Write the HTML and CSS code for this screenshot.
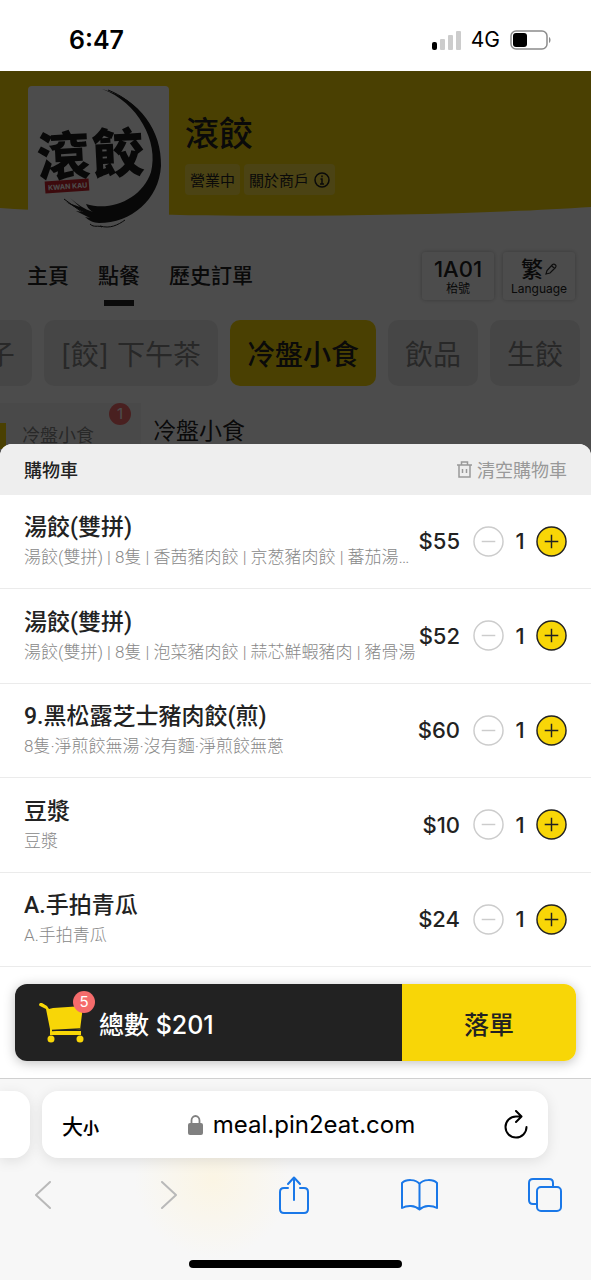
FILE: index.html
```html
<!DOCTYPE html>
<html lang="zh-Hant">
<head>
    <meta charset="UTF-8">
    <meta name="viewport" content="width=device-width, initial-scale=1.0">
    <title>滾餃</title>
    <link rel="stylesheet" href="styles.css">
</head>
<body>
    <div class="status-bar">
        <time class="clock">6:47</time>
        <div class="status-icons">
            <svg width="30" height="20" viewBox="0 0 30 20">
                <rect x="1" y="12" width="5" height="8" rx="2" fill="#000"/>
                <rect x="9" y="9" width="5" height="11" rx="1" fill="#ccc"/>
                <rect x="17" y="5" width="5" height="15" rx="1" fill="#ccc"/>
                <rect x="25" y="1" width="5" height="19" rx="1" fill="#ccc"/>
            </svg>
            <span>4G</span>
            <svg width="41" height="20" viewBox="0 0 41 20">
                <rect x="1" y="1" width="36" height="18" rx="5" fill="none" stroke="#8c8c8c" stroke-width="1.5"/>
                <rect x="3" y="3" width="14" height="14" rx="3" fill="#000"/>
                <path d="M39 7c2 1 2 5 0 6z" fill="#8c8c8c"/>
            </svg>
        </div>
    </div>

    <main class="page">
        <div class="shop">
            <header class="banner">
                <svg class="banner-bg" viewBox="0 0 591 146" preserveAspectRatio="none">
                    <path d="M0 0H591V136C440 146 180 149 0 137z" fill="#f8d607"/>
                </svg>
                <svg class="logo" width="141" height="154" viewBox="0 0 141 154">
                    <rect width="141" height="154" rx="4" fill="#fff"/>
                    <path d="M74 3C112 13 134 45 133 80C131 114 103 137 71 137C66 137 60 134 57 131L62 132L48 125L55 126L38 116L52 121L42 112C49 118 56 123 65 126C60 123 59 120 58 118C83 126 114 113 123 86C131 56 110 16 74 3z" fill="#1c1c1c"/>
                    <path d="M62 138C66 142 70 139 74 141M72 140C82 143 90 139 97 134M80 4C106 14 126 38 130 62M36 113L58 129" fill="none" stroke="#1c1c1c" stroke-width="1"/>
                    <g transform="rotate(-3 65 70)">
                        <text class="logo-text" x="9" y="88">滾</text>
                        <text class="logo-text" x="64" y="88">餃</text>
                    </g>
                    <g transform="rotate(-4 38 100)">
                        <rect x="17" y="94" width="44" height="12" fill="#c8232c"/>
                        <text class="logo-tag" x="20" y="103">KWAN KAU</text>
                    </g>
                </svg>
                <div class="shop-info">
                    <h1>滾餃</h1>
                    <div class="chips">
                        <span class="chip">營業中</span>
                        <a class="chip" href="#">關於商戶
                            <svg width="16" height="16" viewBox="0 0 16 16" fill="none" stroke="#222" stroke-width="1.5">
                                <circle cx="8" cy="8" r="7"/>
                                <path d="M8 3.500V5.300M6.500 7H8V12M6 12H10"/>
                            </svg>
                        </a>
                    </div>
                </div>
            </header>

            <nav class="tabs">
                <a href="#">主頁</a>
                <a href="#" class="active">點餐</a>
                <a href="#">歷史訂單</a>
                <div class="tools">
                    <button type="button" class="tool">
                        <span class="tool-main">1A01</span>
                        <span class="tool-sub">枱號</span>
                    </button>
                    <button type="button" class="tool">
                        <span class="tool-main">繁<svg width="12" height="12" viewBox="0 0 12 12" fill="none" stroke="#333" stroke-width="1.200"><path d="M1 11L2 7.500L7.500 1.500Q9 .5 10.500 2Q11.500 3 10.500 4.500L5 10zM6.500 2.500L9.500 5.500"/></svg></span>
                        <span class="tool-sub">Language</span>
                    </button>
                </div>
            </nav>

            <div class="categories">
                <button type="button">餃子</button>
                <button type="button">[餃] 下午茶</button>
                <button type="button" class="active">冷盤小食</button>
                <button type="button">飲品</button>
                <button type="button">生餃</button>
            </div>

            <div class="menu">
                <aside class="side"><a href="#">冷盤小食<span class="badge">1</span></a></aside>
                <h2>冷盤小食</h2>
            </div>
        </div>

        <div class="mask"></div>

        <section class="sheet">
            <header class="sheet-head">
                <h2>購物車</h2>
                <button type="button" class="clear">
                    <svg width="15" height="17" viewBox="0 0 15 17" fill="none" stroke="#999" stroke-width="1.500">
                        <path d="M0 4H15M4.500 4V1H10.500V4M2 4V16H13V4M5.500 8V12M9.500 8V12"/>
                    </svg>
                    清空購物車
                </button>
            </header>
            <ul class="items">
                <li>
                    <div class="item-text">
                        <h3>湯餃(雙拼)</h3>
                        <p>湯餃(雙拼) | 8隻 | 香茜豬肉餃 | 京葱豬肉餃 | 蕃茄湯…</p>
                    </div>
                    <span class="price">$55</span>
                    <button type="button" class="step" aria-label="減少"><svg viewBox="0 0 32 32"><circle cx="16" cy="16" r="15"/><path d="M9 16H23"/></svg></button>
                    <span class="count">1</span>
                    <button type="button" class="step plus" aria-label="增加"><svg viewBox="0 0 32 32"><circle cx="16" cy="16" r="15"/><path d="M9 16H23M16 9V23"/></svg></button>
                </li>
                <li>
                    <div class="item-text">
                        <h3>湯餃(雙拼)</h3>
                        <p>湯餃(雙拼) | 8隻 | 泡菜豬肉餃 | 蒜芯鮮蝦豬肉 | 豬骨湯</p>
                    </div>
                    <span class="price">$52</span>
                    <button type="button" class="step" aria-label="減少"><svg viewBox="0 0 32 32"><circle cx="16" cy="16" r="15"/><path d="M9 16H23"/></svg></button>
                    <span class="count">1</span>
                    <button type="button" class="step plus" aria-label="增加"><svg viewBox="0 0 32 32"><circle cx="16" cy="16" r="15"/><path d="M9 16H23M16 9V23"/></svg></button>
                </li>
                <li>
                    <div class="item-text">
                        <h3>9.黑松露芝士豬肉餃(煎)</h3>
                        <p>8隻·淨煎餃無湯·沒有麵·淨煎餃無蔥</p>
                    </div>
                    <span class="price">$60</span>
                    <button type="button" class="step" aria-label="減少"><svg viewBox="0 0 32 32"><circle cx="16" cy="16" r="15"/><path d="M9 16H23"/></svg></button>
                    <span class="count">1</span>
                    <button type="button" class="step plus" aria-label="增加"><svg viewBox="0 0 32 32"><circle cx="16" cy="16" r="15"/><path d="M9 16H23M16 9V23"/></svg></button>
                </li>
                <li>
                    <div class="item-text">
                        <h3>豆漿</h3>
                        <p>豆漿</p>
                    </div>
                    <span class="price">$10</span>
                    <button type="button" class="step" aria-label="減少"><svg viewBox="0 0 32 32"><circle cx="16" cy="16" r="15"/><path d="M9 16H23"/></svg></button>
                    <span class="count">1</span>
                    <button type="button" class="step plus" aria-label="增加"><svg viewBox="0 0 32 32"><circle cx="16" cy="16" r="15"/><path d="M9 16H23M16 9V23"/></svg></button>
                </li>
                <li>
                    <div class="item-text">
                        <h3>A.手拍青瓜</h3>
                        <p>A.手拍青瓜</p>
                    </div>
                    <span class="price">$24</span>
                    <button type="button" class="step" aria-label="減少"><svg viewBox="0 0 32 32"><circle cx="16" cy="16" r="15"/><path d="M9 16H23"/></svg></button>
                    <span class="count">1</span>
                    <button type="button" class="step plus" aria-label="增加"><svg viewBox="0 0 32 32"><circle cx="16" cy="16" r="15"/><path d="M9 16H23M16 9V23"/></svg></button>
                </li>
            </ul>
            <footer class="checkout">
                <div class="total">
                    <span class="cart">
                        <svg width="46" height="40" viewBox="0 0 46 40" fill="#f8d607">
                            <path d="M1 0Q-1 2 1 3L7 6L11 26V32H42V28H13V27H41L44 3L14 5L10 6L8 3L3 0Q1 -1 1 0z"/>
                            <path d="M13 27.500L41 26" stroke="#222" stroke-width="1.500"/>
                            <circle cx="12" cy="36" r="3.500"/>
                            <circle cx="41" cy="36" r="3.500"/>
                        </svg>
                        <span class="badge">5</span>
                    </span>
                    總數 $201
                </div>
                <button type="button" class="order">落單</button>
            </footer>
        </section>
    </main>

    <footer class="browser">
        <div class="address-row">
            <div class="prev-tab"></div>
            <div class="address">
                <button type="button" class="text-size" aria-label="文字大小"><span>大</span><small>小</small></button>
                <a class="url" href="#">
                    <svg width="15" height="20" viewBox="0 0 15 20">
                        <rect y="8" width="15" height="12" rx="2" fill="#808080"/>
                        <path d="M3.500 9V5.500a4 4.500 0 0 1 8 0V9" fill="none" stroke="#808080" stroke-width="1.800"/>
                    </svg>
                    meal.pin2eat.com
                </a>
                <button type="button" aria-label="重新載入">
                    <svg width="24" height="30" viewBox="0 0 24 30" fill="none" stroke="#000" stroke-width="2" stroke-linecap="round" stroke-linejoin="round">
                        <path d="M22.500 17A10.500 10.500 0 1 1 12 6.500H17M12 1L17.500 6.500L12 12"/>
                    </svg>
                </button>
            </div>
        </div>
        <nav class="toolbar">
            <button type="button" aria-label="上一頁"><svg width="16" height="28" viewBox="0 0 16 28" stroke="#b9b9b9"><path d="M15 1L1 14L15 27"/></svg></button>
            <button type="button" aria-label="下一頁"><svg width="16" height="28" viewBox="0 0 16 28" stroke="#b9b9b9"><path d="M1 1L15 14L1 27"/></svg></button>
            <button type="button" aria-label="分享"><svg width="30" height="38" viewBox="0 0 30 38"><path d="M9 12H5Q1 12 1 16V33Q1 37 5 37H25Q29 37 29 33V16Q29 12 25 12H21M15 24V2M9 8L15 1.500L21 8"/></svg></button>
            <button type="button" aria-label="書籤"><svg width="37" height="32" viewBox="0 0 37 32"><path d="M18.500 5C15 0 5 0 1 4V29C6 26 14 26 18.500 30.500C23 26 31 26 36 29V4C32 0 22 0 18.500 5V30"/></svg></button>
            <button type="button" aria-label="分頁"><svg width="34" height="34" viewBox="0 0 34 34"><path d="M8 26H5Q1 26 1 22V5Q1 1 5 1H21Q25 1 25 5V8"/><rect x="9" y="9" width="24" height="24" rx="4"/></svg></button>
        </nav>
        <div class="home-bar"></div>
    </footer>
</body>
</html>
```

FILE: styles.css
```css
* {
    box-sizing: border-box;
}

body {
    margin: 0;
    min-height: 100vh;
    display: flex;
    flex-direction: column;
    font-family: Inter, "Noto Sans CJK TC", sans-serif;
    color: #222;
    background: #fff;
    overflow-x: hidden;
}

h1, h2, h3, p, ul {
    margin: 0;
    padding: 0;
    font-weight: 500;
}

button {
    border: none;
    padding: 0;
    background: none;
    font: inherit;
    color: inherit;
    cursor: pointer;
}

a {
    color: inherit;
    text-decoration: none;
}

svg {
    display: block;
    flex-shrink: 0;
}

.status-bar {
    height: 71px;
    padding: 8px 40px 0 69px;
    display: flex;
    align-items: center;
    justify-content: space-between;
    color: #000;
}

.clock {
    font-size: 25px;
    font-weight: 600;
}

.status-icons {
    display: flex;
    align-items: center;
    gap: 10px;
    font-size: 21px;
}

.page {
    position: relative;
    flex: 1;
    overflow: hidden;
}

/* shop page behind the cart */
.banner {
    position: relative;
    display: flex;
    gap: 16px;
    padding: 15px 28px 0;
    height: 169px;
}

.banner-bg {
    position: absolute;
    top: 0;
    left: 0;
    width: 100%;
    height: 146px;
}

.logo {
    position: relative;
}

.logo-text {
    font-size: 53px;
    font-weight: 900;
    fill: #1c1c1c;
}

.logo-tag {
    font-size: 7px;
    font-weight: 700;
    fill: #fff;
}

.shop-info {
    position: relative;
    padding-top: 24px;
}

.shop-info h1 {
    font-size: 34px;
    line-height: 48px;
}

.chips {
    display: flex;
    gap: 4px;
    padding-top: 6px;
}

.chip {
    display: flex;
    align-items: center;
    gap: 5px;
    height: 31px;
    padding: 0 5px;
    border-radius: 4px;
    font-size: 15px;
    background: rgba(255, 255, 255, .25);
}

.tabs {
    display: flex;
    align-items: center;
    gap: 29px;
    height: 72px;
    padding: 0 16px 0 27px;
    font-size: 21px;
    font-weight: 500;
}

.tabs > a {
    display: flex;
    flex-direction: column;
    align-items: center;
    padding-top: 14px;
    line-height: 32px;
}

.tabs > a::after {
    content: "";
    width: 30px;
    height: 6px;
    margin-top: 8px;
}

.tabs .active::after {
    background: #222;
}

.tools {
    display: flex;
    gap: 9px;
    margin-left: auto;
}

.tool {
    width: 72px;
    height: 48px;
    display: flex;
    flex-direction: column;
    align-items: center;
    justify-content: center;
    border-radius: 3px;
    box-shadow: 0 0 4px rgba(0, 0, 0, .25);
}

.tool-main {
    display: flex;
    align-items: center;
    gap: 2px;
    font-size: 22px;
    line-height: 26px;
}

.tool-sub {
    font-size: 12px;
    font-weight: 400;
    line-height: 14px;
}

.categories {
    display: flex;
    justify-content: flex-end;
    gap: 12px;
    padding: 8px 11px 17px 0;
}

.categories button {
    flex-shrink: 0;
    height: 66px;
    padding: 0 17px;
    border-radius: 10px;
    font-size: 28px;
    color: #888;
    background: #ececec;
}

.categories .active {
    color: #222;
    font-weight: 500;
    background: #f8d607;
}

.menu {
    display: flex;
    gap: 12px;
}

.menu h2 {
    padding-top: 12px;
    font-size: 23px;
    font-weight: 400;
    line-height: 32px;
}

.side {
    width: 141px;
    background: #f6f6f6;
}

.side a {
    position: relative;
    display: block;
    margin-top: 20px;
    padding-left: 16px;
    border-left: 6px solid #f8d607;
    font-size: 18px;
    line-height: 26px;
    color: #888;
}

.badge {
    position: absolute;
    width: 22px;
    height: 22px;
    border-radius: 50%;
    background: #f56c6c;
    color: #fff;
    font-size: 15px;
    font-weight: 400;
    line-height: 22px;
    text-align: center;
}

.side .badge {
    top: -20px;
    right: 10px;
}

.mask {
    position: absolute;
    inset: 0;
    background: rgba(0, 0, 0, .7);
}

/* cart sheet */
.sheet {
    position: absolute;
    left: 0;
    right: 0;
    bottom: 0;
    height: 63%;
    display: flex;
    flex-direction: column;
    border-radius: 12px 12px 0 0;
    background: #fff;
    overflow: hidden;
}

.sheet-head {
    display: flex;
    align-items: center;
    justify-content: space-between;
    height: 51px;
    padding: 0 24px;
    background: #eee;
    font-size: 18px;
}

.sheet-head h2 {
    font-size: 18px;
}

.clear {
    display: flex;
    align-items: center;
    gap: 5px;
    color: #999;
}

.items {
    flex: 1;
    display: flex;
    flex-direction: column;
    list-style: none;
}

.items li {
    flex: 1;
    display: flex;
    align-items: center;
    padding: 0 24px;
    border-bottom: 1px solid #ebebeb;
}

.item-text {
    flex: 1;
    min-width: 0;
    font-family: Roboto, "Noto Sans CJK TC", sans-serif;
}

.item-text h3 {
    font-size: 23px;
    line-height: 32px;
}

.item-text p {
    font-size: 17px;
    font-weight: 300;
    line-height: 26px;
    color: #888;
    white-space: nowrap;
}

.price {
    font-size: 22px;
    font-weight: 500;
}

.count {
    width: 32px;
    font-size: 22px;
    text-align: center;
}

.step {
    width: 31px;
    height: 31px;
}

.price + .step {
    margin-left: 13px;
}

.step svg {
    fill: #fff;
    stroke: #ccc;
    stroke-width: 1.5;
}

.plus svg {
    fill: #f8d607;
    stroke: #222;
}

.checkout {
    display: flex;
    height: 77px;
    margin: 17px 15px;
    border-radius: 12px;
    box-shadow: 0 2px 12px rgba(0, 0, 0, .25);
}

.total {
    flex: 1;
    display: flex;
    align-items: center;
    gap: 14px;
    padding-left: 24px;
    border-radius: 12px 0 0 12px;
    font-size: 25px;
    font-weight: 500;
    color: #fff;
    background: #222;
}

.cart {
    position: relative;
}

.cart .badge {
    top: -12px;
    right: -10px;
}

.order {
    width: 31%;
    border-radius: 0 12px 12px 0;
    font-size: 25px;
    font-weight: 500;
    background: #f8d607;
}

/* browser chrome */
.browser {
    position: relative;
    height: 202px;
    padding-top: 12px;
    border-top: 1px solid #d0d0d0;
    background: radial-gradient(circle at 36% 50%, #fbf5e4, #f7f7f7 20%);
    color: #000;
}

.address-row {
    display: flex;
    gap: 12px;
    padding-right: 43px;
}

.prev-tab {
    width: 30px;
    border-radius: 0 16px 16px 0;
    background: #fff;
    box-shadow: 0 3px 14px rgba(0, 0, 0, .1);
}

.address {
    flex: 1;
    display: flex;
    align-items: center;
    justify-content: space-between;
    height: 67px;
    padding: 0 20px;
    border-radius: 16px;
    background: #fff;
    box-shadow: 0 3px 14px rgba(0, 0, 0, .1);
}

.text-size {
    font-size: 21px;
    font-weight: 500;
}

.text-size small {
    font-size: 16px;
    font-weight: 700;
}

.url {
    display: flex;
    align-items: center;
    gap: 10px;
    font-size: 24px;
}

.toolbar {
    display: flex;
    align-items: center;
    justify-content: space-between;
    height: 74px;
    padding: 0 18px 0 15px;
}

.toolbar button {
    width: 56px;
    display: flex;
    justify-content: center;
}

.toolbar svg {
    fill: none;
    stroke-width: 2;
    stroke-linecap: round;
    stroke-linejoin: round;
}

.toolbar svg:not([stroke]) {
    stroke: #1a78e8;
}

.home-bar {
    width: 36%;
    height: 8px;
    margin: 28px auto 0;
    border-radius: 4px;
    background: #000;
}
```
